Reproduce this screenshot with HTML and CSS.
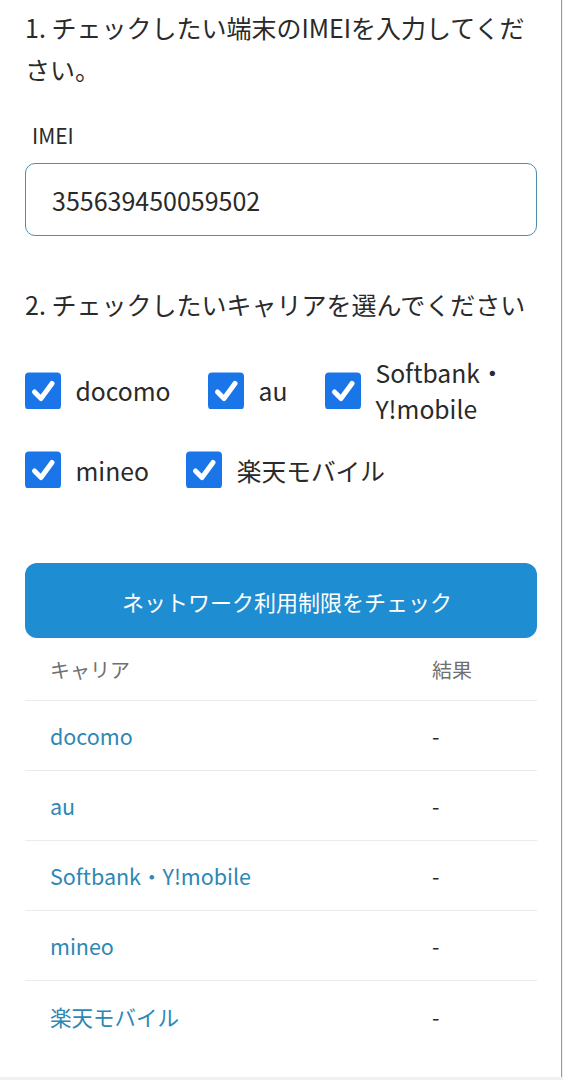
FILE: index.html
```html
<!DOCTYPE html>
<html lang="ja">
<head>
<meta charset="utf-8">
<title>ネットワーク利用制限チェック</title>
<link rel="stylesheet" href="styles.css">
</head>
<body>
<div class="page">
  <h2 class="step">1. チェックしたい端末のIMEIを入力してください。</h2>
  <label class="field-label" for="imei">IMEI</label>
  <div class="input">355639450059502</div>

  <h2 class="step step-2">2. チェックしたいキャリアを選んでください</h2>
  <div class="carriers">
    <div class="carrier-row">
      <div class="check"><span class="box"><svg viewBox="0 0 36 36"><rect width="36" height="37" rx="4" fill="#1a76e8"/><path d="M9.5 19.5 L16 26 L27 11" fill="none" stroke="#fff" stroke-width="5" stroke-linecap="round" stroke-linejoin="round"/></svg></span><span class="check-text">docomo</span></div>
      <div class="check"><span class="box"><svg viewBox="0 0 36 36"><rect width="36" height="37" rx="4" fill="#1a76e8"/><path d="M9.5 19.5 L16 26 L27 11" fill="none" stroke="#fff" stroke-width="5" stroke-linecap="round" stroke-linejoin="round"/></svg></span><span class="check-text">au</span></div>
      <div class="check"><span class="box"><svg viewBox="0 0 36 36"><rect width="36" height="37" rx="4" fill="#1a76e8"/><path d="M9.5 19.5 L16 26 L27 11" fill="none" stroke="#fff" stroke-width="5" stroke-linecap="round" stroke-linejoin="round"/></svg></span><span class="check-text">Softbank・<br>Y!mobile</span></div>
    </div>
    <div class="carrier-row">
      <div class="check"><span class="box"><svg viewBox="0 0 36 36"><rect width="36" height="37" rx="4" fill="#1a76e8"/><path d="M9.5 19.5 L16 26 L27 11" fill="none" stroke="#fff" stroke-width="5" stroke-linecap="round" stroke-linejoin="round"/></svg></span><span class="check-text">mineo</span></div>
      <div class="check"><span class="box"><svg viewBox="0 0 36 36"><rect width="36" height="37" rx="4" fill="#1a76e8"/><path d="M9.5 19.5 L16 26 L27 11" fill="none" stroke="#fff" stroke-width="5" stroke-linecap="round" stroke-linejoin="round"/></svg></span><span class="check-text">楽天モバイル</span></div>
    </div>
  </div>

  <div class="button">ネットワーク利用制限をチェック</div>

  <div class="table">
    <div class="tr th"><span>キャリア</span><span>結果</span></div>
    <div class="tr"><a class="carrier">docomo</a><span class="result">-</span></div>
    <div class="tr"><a class="carrier">au</a><span class="result">-</span></div>
    <div class="tr"><a class="carrier">Softbank・Y!mobile</a><span class="result">-</span></div>
    <div class="tr"><a class="carrier">mineo</a><span class="result">-</span></div>
    <div class="tr last"><a class="carrier">楽天モバイル</a><span class="result">-</span></div>
  </div>
</div>
</body>
</html>
```

FILE: styles.css
```css
html, body {
  margin: 0;
  padding: 0;
  background: #eef0f2;
}
body {
  font-family: "Noto Sans CJK JP", "Noto Sans", sans-serif;
  color: #2a2a2a;
}
.page {
  box-sizing: border-box;
  width: 562px;
  height: 1077px;
  background: #fff;
  border-right: 1px solid #9a9a9a;
  padding: 6px 24px 0 25px;
  display: flex;
  flex-direction: column;
}
.step {
  margin: 0;
  font-size: 25px;
  font-weight: 400;
  line-height: 42px;
  color: #2a2a2a;
}
.step-2 {
  margin-top: 47px;
}
.field-label {
  display: block;
  margin: 30px 0 0 7px;
  font-size: 21px;
  line-height: 30px;
  color: #2a2a2a;
}
.input {
  box-sizing: border-box;
  margin-top: 13px;
  height: 73px;
  border: 1.5px solid #4b8fab;
  border-radius: 10px;
  padding: 0 26px;
  display: flex;
  align-items: center;
  font-size: 25px;
  color: #2a2a2a;
}
.carriers {
  margin-top: 29px;
  display: flex;
  flex-direction: column;
  gap: 25px;
}
.carrier-row {
  display: flex;
  align-items: center;
  gap: 37.5px;
}
.check {
  display: flex;
  align-items: center;
  gap: 14.5px;
  min-width: 0;
}
.box {
  flex: none;
  width: 36px;
  height: 37px;
  display: block;
}
.box svg {
  width: 36px;
  height: 37px;
  display: block;
}
.check-text {
  font-size: 24.7px;
  line-height: 36px;
  color: #2a2a2a;
  white-space: nowrap;
}
.button {
  margin-top: 75px;
  height: 75px;
  border-radius: 12px;
  background: #1f8dd1;
  color: #fff;
  font-size: 22px;
  padding-left: 12px;
  display: flex;
  align-items: center;
  justify-content: center;
}
.table {
  display: flex;
  flex-direction: column;
}
.tr {
  display: grid;
  grid-template-columns: 382px 1fr;
  align-items: center;
  height: 70px;
  box-sizing: border-box;
  border-bottom: 1px solid #ebebeb;
  padding-left: 25px;
  font-size: 21.5px;
}
.tr.th {
  height: 63px;
  color: #707070;
  font-size: 20px;
}
.tr.last {
  border-bottom: none;
}
.carrier {
  color: #2d88b4;
  text-decoration: none;
}
.result {
  color: #2a2a2a;
}
```
